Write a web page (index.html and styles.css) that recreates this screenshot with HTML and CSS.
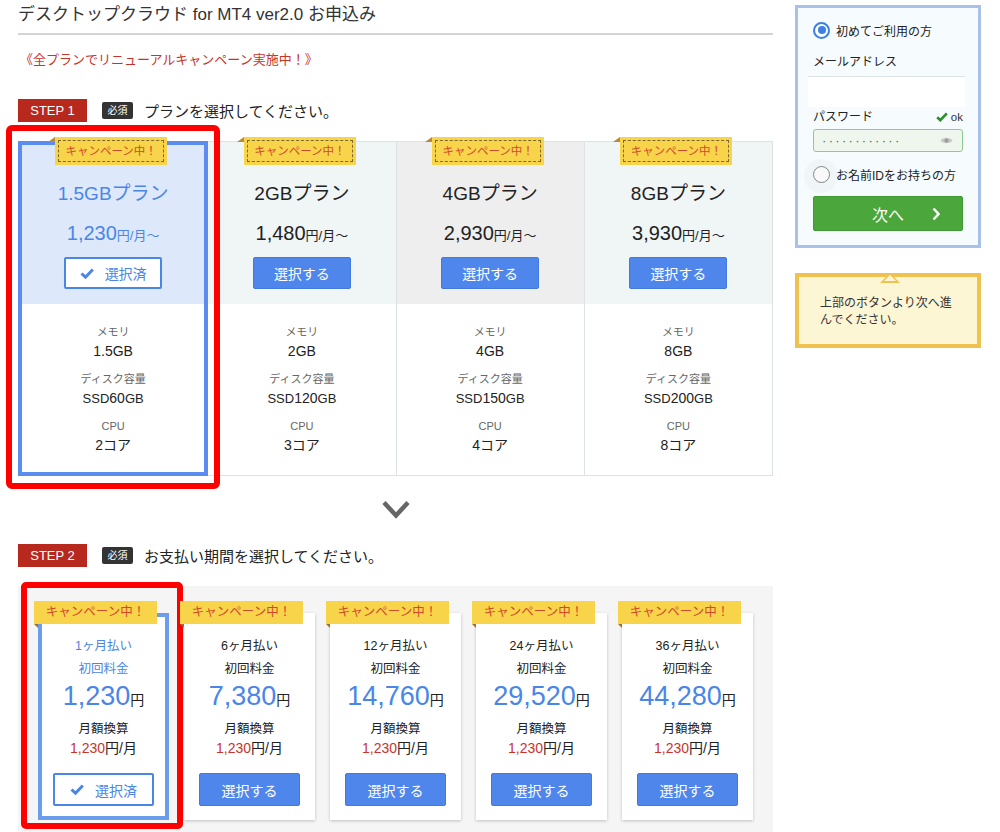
FILE: index.html
```html
<!DOCTYPE html>
<html lang="ja">
<head>
<meta charset="utf-8">
<title>デスクトップクラウド for MT4 ver2.0 お申込み</title>
<link rel="stylesheet" href="styles.css">
</head>
<body>
<div class="page">
  <main class="main">
    <h1 class="title">デスクトップクラウド for MT4 ver2.0 お申込み</h1>
    <p class="campaign">《全プランでリニューアルキャンペーン実施中！》</p>

    <div class="step-head">
      <span class="step">STEP 1</span>
      <span class="req">必須</span>
      <span class="step-text">プランを選択してください。</span>
    </div>

    <div class="plans">
      <div class="plan selected">
        <div class="plan-top">
          <span class="tag">キャンペーン中！</span>
          <div class="plan-name">1.5GBプラン</div>
          <div class="plan-price">1,230<small>円/月〜</small></div>
          <button class="btn btn-done"><svg class="chk" viewBox="0 0 14 11"><path d="M1.5 5.5 L5.5 9.2 L12.8 1.5"/></svg>選択済</button>
        </div>
        <div class="plan-specs">
          <div class="spec-label">メモリ</div><div class="spec-val">1.5GB</div>
          <div class="spec-label">ディスク容量</div><div class="spec-val"><small>SSD</small>60<small>GB</small></div>
          <div class="spec-label">CPU</div><div class="spec-val">2コア</div>
        </div>
      </div>
      <div class="plan">
        <div class="plan-top">
          <span class="tag">キャンペーン中！</span>
          <div class="plan-name">2GBプラン</div>
          <div class="plan-price">1,480<small>円/月〜</small></div>
          <button class="btn">選択する</button>
        </div>
        <div class="plan-specs">
          <div class="spec-label">メモリ</div><div class="spec-val">2GB</div>
          <div class="spec-label">ディスク容量</div><div class="spec-val"><small>SSD</small>120<small>GB</small></div>
          <div class="spec-label">CPU</div><div class="spec-val">3コア</div>
        </div>
      </div>
      <div class="plan hover">
        <div class="plan-top">
          <span class="tag">キャンペーン中！</span>
          <div class="plan-name">4GBプラン</div>
          <div class="plan-price">2,930<small>円/月〜</small></div>
          <button class="btn">選択する</button>
        </div>
        <div class="plan-specs">
          <div class="spec-label">メモリ</div><div class="spec-val">4GB</div>
          <div class="spec-label">ディスク容量</div><div class="spec-val"><small>SSD</small>150<small>GB</small></div>
          <div class="spec-label">CPU</div><div class="spec-val">4コア</div>
        </div>
      </div>
      <div class="plan">
        <div class="plan-top">
          <span class="tag">キャンペーン中！</span>
          <div class="plan-name">8GBプラン</div>
          <div class="plan-price">3,930<small>円/月〜</small></div>
          <button class="btn">選択する</button>
        </div>
        <div class="plan-specs">
          <div class="spec-label">メモリ</div><div class="spec-val">8GB</div>
          <div class="spec-label">ディスク容量</div><div class="spec-val"><small>SSD</small>200<small>GB</small></div>
          <div class="spec-label">CPU</div><div class="spec-val">8コア</div>
        </div>
      </div>
    </div>

    <div class="down"><svg viewBox="0 0 28 19"><polyline points="2,2.5 14,15.5 26,2.5"/></svg></div>

    <div class="step-head step2">
      <span class="step">STEP 2</span>
      <span class="req">必須</span>
      <span class="step-text">お支払い期間を選択してください。</span>
    </div>

    <div class="terms">
      <div class="term selected">
        <span class="ttag">キャンペーン中！</span>
        <div class="t-period">1ヶ月払い</div>
        <div class="t-label">初回料金</div>
        <div class="t-price">1,230<small>円</small></div>
        <div class="t-label2">月額換算</div>
        <div class="t-month"><em>1,230</em>円/月</div>
        <button class="btn tbtn btn-done"><svg class="chk" viewBox="0 0 14 11"><path d="M1.5 5.5 L5.5 9.2 L12.8 1.5"/></svg>選択済</button>
      </div>
      <div class="term">
        <span class="ttag">キャンペーン中！</span>
        <div class="t-period">6ヶ月払い</div>
        <div class="t-label">初回料金</div>
        <div class="t-price">7,380<small>円</small></div>
        <div class="t-label2">月額換算</div>
        <div class="t-month"><em>1,230</em>円/月</div>
        <button class="btn tbtn">選択する</button>
      </div>
      <div class="term">
        <span class="ttag">キャンペーン中！</span>
        <div class="t-period">12ヶ月払い</div>
        <div class="t-label">初回料金</div>
        <div class="t-price">14,760<small>円</small></div>
        <div class="t-label2">月額換算</div>
        <div class="t-month"><em>1,230</em>円/月</div>
        <button class="btn tbtn">選択する</button>
      </div>
      <div class="term">
        <span class="ttag">キャンペーン中！</span>
        <div class="t-period">24ヶ月払い</div>
        <div class="t-label">初回料金</div>
        <div class="t-price">29,520<small>円</small></div>
        <div class="t-label2">月額換算</div>
        <div class="t-month"><em>1,230</em>円/月</div>
        <button class="btn tbtn">選択する</button>
      </div>
      <div class="term">
        <span class="ttag">キャンペーン中！</span>
        <div class="t-period">36ヶ月払い</div>
        <div class="t-label">初回料金</div>
        <div class="t-price">44,280<small>円</small></div>
        <div class="t-label2">月額換算</div>
        <div class="t-month"><em>1,230</em>円/月</div>
        <button class="btn tbtn">選択する</button>
      </div>
    </div>
  </main>

  <aside class="side">
    <div class="login">
      <label class="radio-row"><span class="radio on"></span>初めてご利用の方</label>
      <div class="field-label">メールアドレス</div>
      <div class="email"></div>
      <div class="pw-row"><span>パスワード</span><span class="ok"><svg viewBox="0 0 12 10"><path d="M1.2 5.2 L4.3 8.2 L10.8 1.3"/></svg>ok</span></div>
      <div class="pw"><span class="dots">············</span><svg class="eye" viewBox="0 0 14 9"><path d="M0.5 4.5 C3 0.6 11 0.6 13.5 4.5 C11 8.4 3 8.4 0.5 4.5 Z"/><circle cx="7" cy="4.5" r="2.2"/></svg></div>
      <label class="radio-row r2"><span class="radio"></span>お名前IDをお持ちの方</label>
      <button class="next">次へ<svg viewBox="0 0 8 14"><polyline points="1.5,1.5 6.5,7 1.5,12.5"/></svg></button>
    </div>
    <div class="tip">上部のボタンより次へ進んでください。</div>
  </aside>
</div>
</body>
</html>
```
FILE: styles.css
```css
* { box-sizing: border-box; }

body {
  margin: 0;
  font-family: "Liberation Sans", "Noto Sans CJK JP", sans-serif;
  color: #222;
  background: #fff;
}

.page {
  display: flex;
  align-items: flex-start;
  padding-left: 18px;
  gap: 22px;
}

.main { width: 755px; flex: none; }

.title {
  margin: 0;
  padding: 5px 0 8px;
  font-size: 17px;
  font-weight: normal;
  line-height: 20px;
  color: #333;
  border-bottom: 2px solid #d4d4d4;
}

.campaign {
  margin: 16px 0 0 2px;
  font-size: 13px;
  line-height: 18px;
  color: #c6342a;
}

.step-head {
  display: flex;
  align-items: center;
  margin-top: 30px;
  height: 23px;
}
.step-head.step2 { margin-top: 25px; }

.step {
  width: 69px;
  height: 23px;
  background: #b7281d;
  color: #fff;
  font-size: 13px;
  line-height: 23px;
  text-align: center;
}
.req {
  margin-left: 15px;
  width: 31px;
  height: 17px;
  background: #333;
  color: #fff;
  font-size: 10px;
  line-height: 17px;
  text-align: center;
  border-radius: 2px;
}
.step-text {
  margin-left: 11px;
  font-size: 15px;
  color: #222;
}

/* ---------- plans ---------- */
.plans {
  margin-top: 19px;
  display: grid;
  grid-template-columns: repeat(4, 1fr);
  border: 1px solid #dde3e5;
}
.plan { position: relative; display: flex; flex-direction: column; }
.plan + .plan { border-left: 1px solid #dde3e5; }

.plan-top {
  position: relative;
  background: #f0f5f6;
  padding: 38px 0 15px;
  text-align: center;
}
.plan.hover .plan-top { background: #eeeeee; }
.plan.selected .plan-top { background: #dde8fa; }

.tag {
  position: absolute;
  top: -5px;
  left: 50%;
  margin-left: -58px;
  width: 112px;
  height: 28px;
  background: #f8d44b;
  color: #d04a2a;
  font-size: 11.5px;
  line-height: 28px;
  text-align: center;
  outline: 1.5px dashed #7d6a2a;
  outline-offset: -4px;
  z-index: 2;
}
.tag::before {
  content: "";
  position: absolute;
  left: -7px;
  top: 0;
  border-left: 7px solid transparent;
  border-bottom: 5px solid #b98a2e;
  border-top-left-radius: 4px;
}

.plan-name {
  font-size: 19px;
  line-height: 28px;
  height: 28px;
  color: #222;
}
.plan-price {
  margin-top: 11px;
  font-size: 20px;
  line-height: 28px;
  height: 28px;
  color: #222;
}
.plan-price small { font-size: 13px; line-height: 1; }
.plan.selected .plan-name,
.plan.selected .plan-price { color: #4a86e8; }

.btn {
  display: inline-flex;
  align-items: center;
  justify-content: center;
  margin-top: 10px;
  width: 98px;
  height: 32px;
  padding: 0;
  border: 1px solid #4279de;
  border-radius: 2px;
  background: #4f86ec;
  color: #fff;
  font-family: inherit;
  font-size: 14px;
  vertical-align: top;
}
.btn.btn-done {
  background: #fff;
  border: 2px solid #4a86e8;
  color: #4a86e8;
}
.chk {
  width: 14px;
  height: 11px;
  margin-right: 11px;
  fill: none;
  stroke: #4a86e8;
  stroke-width: 3;
}

.plan-specs {
  flex: 1;
  background: #fff;
  padding: 20px 0 19px;
  text-align: center;
}
.spec-label {
  font-size: 11px;
  line-height: 16px;
  height: 16px;
  color: #666;
}
.spec-val {
  font-size: 14px;
  line-height: 22px;
  height: 22px;
  color: #222;
  margin-bottom: 9px;
}
.spec-val:last-child { margin-bottom: 0; }
.spec-val small { font-size: 13px; line-height: 1; }

.plan.selected::before {
  content: "";
  position: absolute;
  top: -1px; left: -1px; right: -1px; bottom: -1px;
  border: 4px solid #5a8def;
  z-index: 1;
  pointer-events: none;
}
.plan.selected::after {
  content: "";
  position: absolute;
  top: -17px; left: -13px; right: -13px; bottom: -14px;
  border: 6px solid #ff0000;
  border-radius: 6px;
  z-index: 3;
  pointer-events: none;
}

.down { margin-top: 24px; height: 19px; display: flex; justify-content: center; }
.down svg {
  width: 28px; height: 19px;
  fill: none;
  stroke: #666;
  stroke-width: 4.5;
}

/* ---------- terms ---------- */
.terms {
  margin-top: 19px;
  background: #f5f5f5;
  display: flex;
  justify-content: center;
  align-items: flex-start;
  gap: 15px;
  padding: 27px 0 14px;
}
.term {
  position: relative;
  width: 131px;
  border: 4px solid #fff;
  background: #fff;
  box-shadow: 0 1px 3px rgba(0,0,0,0.22);
  padding: 20px 0 10px;
  text-align: center;
}
.term.selected {
  border-color: #6c9cec;
  box-shadow: none;
}
.term.selected::after {
  content: "";
  position: absolute;
  top: -35px; left: -21px; right: -18px; bottom: -13px;
  border: 6px solid #ff0000;
  border-radius: 5px;
  pointer-events: none;
}
.ttag {
  position: absolute;
  top: -16px;
  left: -8px;
  width: 123px;
  height: 23px;
  background: #f8d44b;
  color: #d04a2a;
  font-size: 12.5px;
  line-height: 23px;
  text-align: center;
}
.ttag::after {
  content: "";
  position: absolute;
  left: 0;
  bottom: -4px;
  border-top: 4px solid #9c7326;
  border-left: 4px solid transparent;
}
.t-period, .t-label, .t-label2 {
  font-size: 12.5px;
  line-height: 18px;
  height: 18px;
  color: #222;
}
.t-label { margin-top: 5px; }
.term.selected .t-period,
.term.selected .t-label { color: #4a86e8; }
.t-price {
  margin-top: 1px;
  font-size: 27px;
  line-height: 34px;
  height: 34px;
  color: #4a86e8;
}
.t-price small { font-size: 14px; line-height: 1; color: #222; }
.t-label2 { margin-top: 7px; }
.t-month {
  margin-top: 1px;
  font-size: 14px;
  line-height: 18px;
  height: 18px;
  color: #222;
}
.t-month em { font-style: normal; color: #cc3329; }
.tbtn {
  margin-top: 16px;
  width: 101px;
  height: 33px;
}

/* ---------- side ---------- */
.side { width: 186px; flex: none; margin-top: 5px; }

.login {
  border: 3px solid #a9c0e8;
  background: #f6fcfd;
  padding: 12px 15px 14px;
}
.radio-row {
  display: flex;
  align-items: center;
  height: 20px;
  font-size: 12px;
  color: #222;
  position: relative;
}
.radio {
  width: 17px;
  height: 17px;
  margin-right: 6px;
  border: 1.5px solid #8a8a8a;
  border-radius: 50%;
  background: #fff;
  position: relative;
}
.radio.on { border: 2px solid #3d7fe3; }
.radio.on::after {
  content: "";
  position: absolute;
  top: 2.5px; left: 2.5px;
  width: 8px; height: 8px;
  border-radius: 50%;
  background: #3d7fe3;
}
.r2 { margin-top: 12px; }
.r2 .radio::before {
  content: "";
  position: absolute;
  left: -10px; top: -8px;
  width: 34px; height: 34px;
  border-radius: 50%;
  background: rgba(0,0,0,0.025);
}
.field-label {
  margin-top: 13px;
  font-size: 12px;
  line-height: 18px;
  color: #222;
}
.email {
  margin: 5px -2px 0 -5px;
  height: 31px;
  background: #fff;
  border-top: 1px solid #dde2e4;
}
.pw-row {
  margin-top: 1px;
  display: flex;
  justify-content: space-between;
  align-items: center;
  font-size: 12px;
  line-height: 18px;
  color: #222;
}
.ok { display: flex; align-items: center; font-size: 11.5px; color: #333; }
.ok svg {
  width: 12px; height: 10px; margin-right: 3px;
  fill: none; stroke: #2e8e2e; stroke-width: 2.6;
}
.pw {
  margin-top: 3px;
  height: 23px;
  display: flex;
  align-items: center;
  justify-content: space-between;
  padding: 0 9px 0 8px;
  border: 1px solid #8ecb8e;
  border-radius: 3px;
  background: #eef6ee;
}
.dots {
  font-size: 13px;
  letter-spacing: 2.3px;
  color: #2e7d2e;
  line-height: 1;
}
.eye { width: 13px; height: 9px; }
.eye path { fill: #c8c8c8; }
.eye circle { fill: #9a9a9a; }

.next {
  position: relative;
  margin-top: 12px;
  width: 100%;
  height: 35px;
  border: 1px solid #3f9a33;
  border-radius: 2px;
  background: #4ba63b;
  color: #fff;
  font-family: inherit;
  font-size: 16px;
  padding: 0;
}
.next svg {
  position: absolute;
  right: 22px;
  top: 10px;
  width: 8px; height: 14px;
  fill: none; stroke: #fff; stroke-width: 2.4;
}

.tip {
  position: relative;
  margin-top: 25px;
  height: 75px;
  border: 4px solid #efc24f;
  background: #fdf6d4;
  padding: 18px 18px 0 21px;
  font-size: 12px;
  line-height: 17px;
  color: #333;
}
.tip::before {
  content: "";
  position: absolute;
  top: -14px;
  left: 81px;
  border: 10px solid transparent;
  border-bottom-color: #efc24f;
}
.tip::after {
  content: "";
  position: absolute;
  top: -8px;
  left: 85px;
  border: 6px solid transparent;
  border-bottom-color: #fdf6d4;
}
```
